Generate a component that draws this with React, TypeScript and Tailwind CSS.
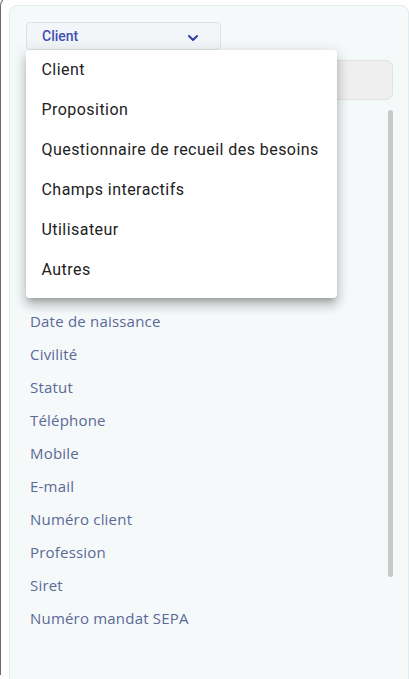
import { ChevronDown } from 'lucide-react'

const MENU = ['Client', 'Proposition', 'Questionnaire de recueil des besoins', 'Champs interactifs', 'Utilisateur', 'Autres']

// les premiers champs sont cachés sous le menu ouvert
const FIELDS = [
    'Date de naissance', 'Civilité', 'Statut', 'Téléphone', 'Mobile', 'E-mail',
    'Numéro client', 'Profession', 'Siret', 'Numéro mandat SEPA',
]

export default function App() {
    return (
        <div className="w-[409px] h-[679px] overflow-hidden bg-white">
            <div className="relative h-full border-l-[1.5px] border-t-[1.5px] border-[#6b6b6b] rounded-tl-[10px] -mt-[4px] pt-[8px] pl-[8px]">
                <div className="h-[700px] bg-[#f5f9fa] border border-[#e3ebee] rounded-[8px] pl-[16px] pr-[15px] pt-[16px]">
                    {/* select */}
                    <button className="w-[195px] h-[28px] flex items-center justify-between pl-[15px] pr-[19px] bg-[#f3f6f8] border border-[#dbe2e6] rounded-[4px] text-[14px] font-medium text-[#3f4fb4]" style={{ fontFamily: 'Roboto, sans-serif' }}>
                        <span className="mt-[1px]">Client</span>
                        <ChevronDown size={16} strokeWidth={3} className="text-[#303f9f] mt-[3px]" />
                    </button>

                    <div className="mt-[10px] h-[40px] bg-[#efefef] border border-[#e2e2e2] rounded-[7px]" />

                    <div className="flex mt-[8px]">
                        <div className="flex-1 pl-[4px] pt-[197px]" style={{ fontFamily: '"Open Sans", sans-serif' }}>
                            {FIELDS.map(f => (
                                <div key={f} className="h-[33px] flex items-center text-[15px] tracking-[0.2px] text-[#5b6997]">{f}</div>
                            ))}
                        </div>
                        <div className="w-[5px] pt-[2px]">
                            <div className="h-[467px] bg-[#c9c9c9] rounded-full" />
                        </div>
                    </div>
                </div>

                {/* dropdown menu */}
                <div className="absolute left-[24.5px] top-[52.5px] w-[311px] bg-white rounded-[4px] pb-[8px] shadow-[0_5px_5px_-3px_rgba(0,0,0,0.2),0_8px_10px_1px_rgba(0,0,0,0.14),0_3px_14px_2px_rgba(0,0,0,0.12)]" style={{ fontFamily: 'Roboto, sans-serif' }}>
                    {MENU.map(m => (
                        <div key={m} className="h-[40px] flex items-center px-[16px] text-[16px] tracking-[0.45px] whitespace-nowrap text-[#222222]">{m}</div>
                    ))}
                </div>
            </div>
        </div>
    )
}
